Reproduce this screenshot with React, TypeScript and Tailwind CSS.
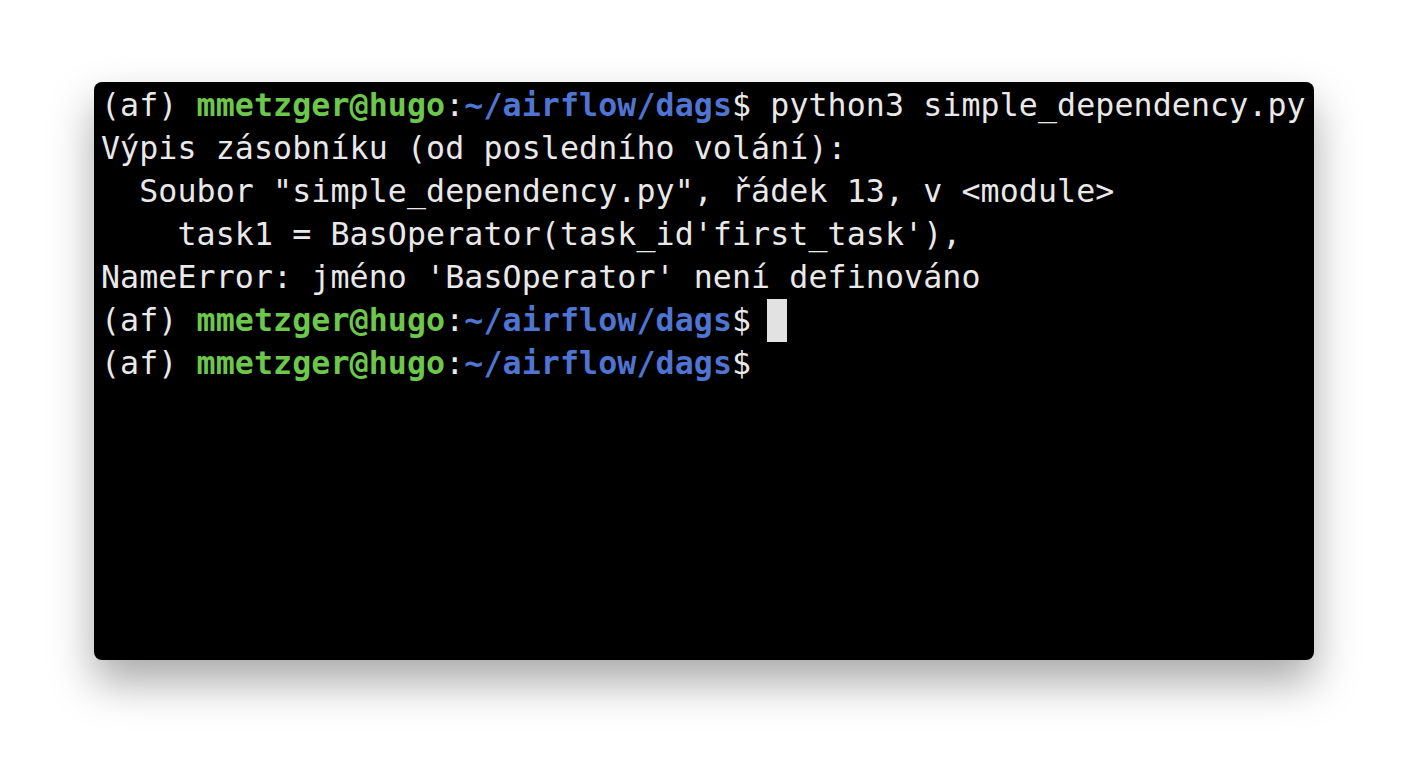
const G = ({ children }: { children: React.ReactNode }) => (
  <span className="font-bold text-[#6cc74c]">{children}</span>
);
const B = ({ children }: { children: React.ReactNode }) => (
  <span className="font-bold text-[#4f74d1]">{children}</span>
);

const Prompt = () => (
  <>
    (af) <G>mmetzger@hugo</G>:<B>~/airflow/dags</B>$
  </>
);

export default function App() {
  return (
    <div className="w-[1408px] h-[768px] bg-white pt-[82px] pl-[94px]">
      <div className="w-[1220px] h-[578px] bg-black rounded-[8px] shadow-[0_22px_44px_rgba(0,0,0,0.34)] pl-[7px] pt-[2px] text-[#e9e9e9] text-[31.6px] leading-[43px] tracking-[0.1px] whitespace-pre font-['DejaVu_Sans_Mono',monospace]">
        <div>
          <Prompt /> python3 simple_dependency.py
        </div>
        <div>Výpis zásobníku (od posledního volání):</div>
        <div>  Soubor "simple_dependency.py", řádek 13, v &lt;module&gt;</div>
        <div>    task1 = BasOperator(task_id'first_task'),</div>
        <div>NameError: jméno 'BasOperator' není definováno</div>
        <div className="flex items-center">
          <span>
            <Prompt />{" "}
          </span>
          <span className="inline-block -ml-[3px] w-[20px] h-[43px] bg-[#e2e2e2]" />
        </div>
        <div>
          <Prompt />
        </div>
      </div>
    </div>
  );
}
